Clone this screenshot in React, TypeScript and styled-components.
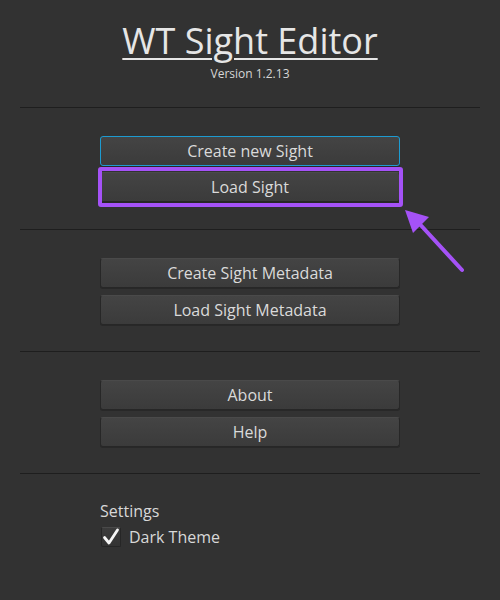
import React from "react";
import styled, { createGlobalStyle } from "styled-components";

const GlobalStyle = createGlobalStyle`
  html, body {
    margin: 0;
    padding: 0;
    background: #323232;
  }
  body {
    font-family: "Open Sans", "DejaVu Sans", sans-serif;
    color: #dcdcdc;
  }
`;

const App = () => (
  <Page>
    <GlobalStyle />
    <Header>
      <Title>WT Sight Editor</Title>
      <Version>Version 1.2.13</Version>
    </Header>
    <Separator />
    <Section $gap={6} $bottom={27}>
      <MenuButton $focused>Create new Sight</MenuButton>
      <MenuButton $highlighted>Load Sight</MenuButton>
    </Section>
    <Separator />
    <Section>
      <MenuButton>Create Sight Metadata</MenuButton>
      <MenuButton>Load Sight Metadata</MenuButton>
    </Section>
    <Separator />
    <Section>
      <MenuButton>About</MenuButton>
      <MenuButton>Help</MenuButton>
    </Section>
    <Separator />
    <Settings>
      <SettingsLabel>Settings</SettingsLabel>
      <CheckRow>
        <CheckBox>
          <svg width="20" height="20" viewBox="0 0 20 20">
            <path
              d="M3.5 10.5 L8 16 L16.5 3"
              fill="none"
              stroke="#f6f6f6"
              strokeWidth="2.8"
              strokeLinecap="round"
              strokeLinejoin="round"
            />
          </svg>
        </CheckBox>
        <span>Dark Theme</span>
      </CheckRow>
    </Settings>
    <Arrow width="80" height="80" viewBox="0 0 80 80">
      <path d="M61 64 L15 14" stroke="#a552f7" strokeWidth="4" strokeLinecap="round" />
      <polygon points="4,4 28,11 12,27" fill="#a552f7" />
    </Arrow>
  </Page>
);

const Page = styled.div`
  position: relative;
  width: 500px;
  height: 600px;
  padding-top: 21px;
  box-sizing: border-box;
`;

const Header = styled.div`
  display: flex;
  flex-direction: column;
  align-items: center;
  padding-bottom: 25px;
`;

const Title = styled.div`
  font-size: 36px;
  line-height: 40px;
  color: #e6e6e6;
  text-decoration: underline;
  text-decoration-thickness: 2px;
  text-underline-offset: 4px;
`;

const Version = styled.div`
  font-size: 12px;
  line-height: 16px;
  margin-top: 5px;
  color: #d6d6d6;
`;

const Separator = styled.div`
  margin: 0 20px;
  height: 1px;
  background: #1e1e1e;
`;

const Section = styled.div<{ $gap?: number; $bottom?: number }>`
  display: flex;
  flex-direction: column;
  align-items: center;
  gap: ${(p) => p.$gap ?? 7}px;
  padding: 28px 0 ${(p) => p.$bottom ?? 26}px;
`;

const MenuButton = styled.button<{ $focused?: boolean; $highlighted?: boolean }>`
  position: relative;
  width: 300px;
  height: 30px;
  box-sizing: border-box;
  font-family: "Open Sans", "DejaVu Sans", sans-serif;
  font-size: 16px;
  color: #dadada;
  background: linear-gradient(#444444, #3b3b3b);
  border: 1px solid ${(p) => (p.$focused ? "#1d9bd1" : "#272727")};
  border-top-color: ${(p) => (p.$focused ? "#1d9bd1" : "#4a4a4a")};
  border-radius: 3px;
  box-shadow: 0 1px 0 #282828;
  padding: 0;
  outline: none;

  &::after {
    content: "";
    display: ${(p) => (p.$highlighted ? "block" : "none")};
    position: absolute;
    left: -3px;
    right: -4px;
    top: -6px;
    bottom: -6px;
    border: 4px solid #a552f7;
    border-radius: 3px;
  }
`;

const Settings = styled.div`
  padding: 26px 0 0 100px;
`;

const SettingsLabel = styled.div`
  font-size: 16px;
  line-height: 22px;
  color: #d8d8d8;
`;

const CheckRow = styled.div`
  display: flex;
  align-items: center;
  gap: 8px;
  margin-top: 4px;
  margin-left: 1px;
  font-size: 16px;
  line-height: 22px;
  color: #d8d8d8;
`;

const CheckBox = styled.div`
  width: 20px;
  height: 20px;
  box-sizing: border-box;
  display: flex;
  align-items: center;
  justify-content: center;
  background: linear-gradient(#3c3c3c, #333333);
  border: 1px solid #262626;
  border-top-color: #4a4a4a;
  border-radius: 2px;
  overflow: visible;

  svg {
    flex: none;
  }
`;

const Arrow = styled.svg`
  position: absolute;
  left: 401px;
  top: 206px;
`;

export default App;
